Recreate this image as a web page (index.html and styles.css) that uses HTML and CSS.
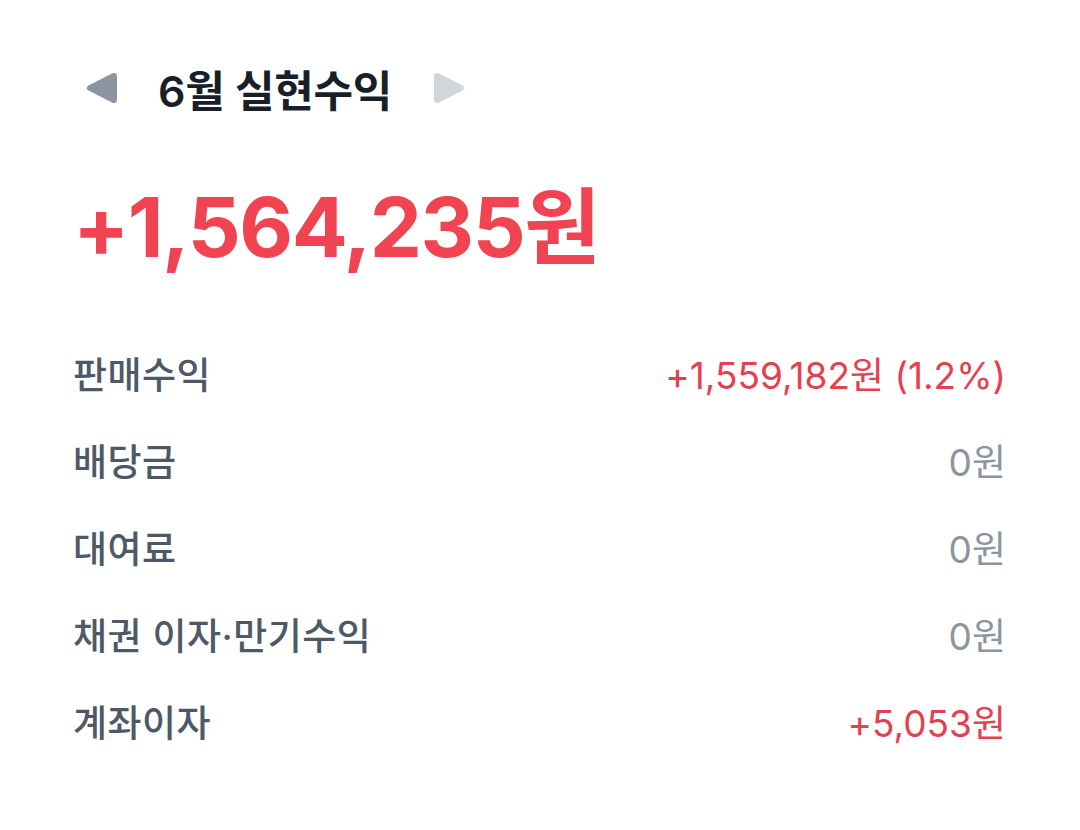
FILE: index.html
```html
<!DOCTYPE html>
<html lang="ko">
<head>
  <meta charset="UTF-8">
  <meta name="viewport" content="width=device-width, initial-scale=1.0">
  <title>실현수익</title>
  <link rel="stylesheet" href="styles.css">
</head>
<body>

  <div class="profit">
    <!-- Month switcher -->
    <div class="month-nav">
      <button class="arrow arrow-prev" aria-label="이전 달">
        <svg width="34" height="34" viewBox="0 0 34 34"><path d="M4 14.2 L27 2.5 Q32 0.5 32 5.5 L32 28.5 Q32 33.5 27 31.5 L4 19.8 Q-1 17 4 14.2 Z" fill="#8b95a1"/></svg>
      </button>
      <h2 class="month-title">6월 실현수익</h2>
      <button class="arrow arrow-next" aria-label="다음 달">
        <svg width="34" height="34" viewBox="0 0 34 34"><path d="M30 14.2 L7 2.5 Q2 0.5 2 5.5 L2 28.5 Q2 33.5 7 31.5 L30 19.8 Q35 17 30 14.2 Z" fill="#d1d6db"/></svg>
      </button>
    </div>

    <div class="total">+1,564,235원</div>

    <!-- Breakdown -->
    <ul class="breakdown">
      <li><span class="label">판매수익</span><span class="value plus">+1,559,182원 (1.2%)</span></li>
      <li><span class="label">배당금</span><span class="value">0원</span></li>
      <li><span class="label">대여료</span><span class="value">0원</span></li>
      <li><span class="label">채권 이자·만기수익</span><span class="value">0원</span></li>
      <li><span class="label">계좌이자</span><span class="value plus">+5,053원</span></li>
    </ul>
  </div>

</body>
</html>
```

FILE: styles.css
```css
body {
  margin: 0;
  background-color: #fff;
  font-family: Inter, "Noto Sans CJK KR", sans-serif;
  color: #191f28;
}

.profit {
  width: 933px;
  padding: 58px 0 0 73px;
}

.month-nav {
  display: flex;
  align-items: center;
  height: 60px;
}

.arrow {
  background: none;
  border: none;
  padding: 0;
  margin: 0;
  display: flex;
  cursor: pointer;
}

.arrow-prev {
  margin-left: 12px;
}

.month-title {
  margin: 0 40px 0 39px;
  font-size: 43px;
  font-weight: 600;
  color: #191f28;
  letter-spacing: -0.3px;
}

.total {
  margin-top: 68px;
  font-size: 83px;
  font-weight: 700;
  line-height: 1;
  color: #f04452;
  letter-spacing: -1.5px;
}

.breakdown {
  list-style: none;
  margin: 60px 0 0 0;
  padding: 0;
}

.breakdown li {
  display: flex;
  justify-content: space-between;
  align-items: center;
  height: 87px;
  font-size: 37px;
}

.label {
  color: #4e5968;
  font-weight: 500;
  letter-spacing: 0.5px;
}

.value {
  color: #8b95a1;
  font-weight: 400;
}

.value.plus {
  color: #e5404f;
}
```
